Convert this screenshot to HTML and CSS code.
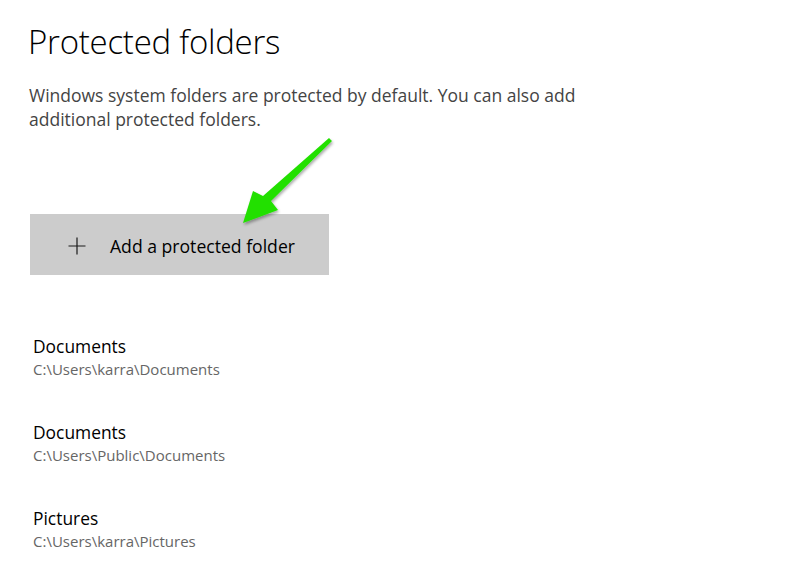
FILE: index.html
```html
<!DOCTYPE html>
<html>
<head>
<meta charset="utf-8">
<link rel="stylesheet" href="styles.css">
</head>
<body>
<main class="page">
  <h1 class="title">Protected folders</h1>
  <p class="desc">Windows system folders are protected by default. You can also add additional protected folders.</p>
  <div class="btn-wrap">
    <button class="add-btn">
      <svg class="plus" width="18" height="18" viewBox="0 0 18 18"><path d="M9 0.5V17.5M0.5 9H17.5" stroke="#1a1a1a" stroke-width="1.2" fill="none"/></svg>
      <span>Add a protected folder</span>
    </button>
    <svg class="arrow" width="120" height="110" viewBox="0 0 120 110">
      <defs>
        <filter id="sh" x="-20%" y="-20%" width="140%" height="140%">
          <feGaussianBlur in="SourceAlpha" stdDeviation="1.5"/>
          <feOffset dx="1" dy="1.5"/>
          <feComponentTransfer><feFuncA type="linear" slope="0.35"/></feComponentTransfer>
          <feMerge><feMergeNode/><feMergeNode in="SourceGraphic"/></feMerge>
        </filter>
      </defs>
      <polygon filter="url(#sh)" fill="#22e000" points="98,6 101,9 40,69 47,78 12,91 22,59 32,64"/>
    </svg>
  </div>
  <ul class="list">
    <li class="item"><div class="name">Documents</div><div class="path">C:\Users\karra\Documents</div></li>
    <li class="item"><div class="name">Documents</div><div class="path">C:\Users\Public\Documents</div></li>
    <li class="item"><div class="name">Pictures</div><div class="path">C:\Users\karra\Pictures</div></li>
  </ul>
</main>
</body>
</html>
```
FILE: styles.css
```css
html, body {
  margin: 0;
  padding: 0;
  background: #fff;
}
body {
  font-family: "Open Sans", "Noto Sans", sans-serif;
  color: #000;
}
.page {
  padding: 20px 0 0 28px;
}
.title {
  margin: 0;
  font-weight: 300;
  font-size: 33px;
  line-height: 44px;
  color: #000;
  letter-spacing: -0.25px;
}
.desc {
  margin: 19px 0 0 1px;
  width: 600px;
  font-size: 17.5px;
  line-height: 24px;
  color: #444;
}
.btn-wrap {
  position: relative;
  margin-top: 83px;
  margin-left: 2px;
  width: 300px;
}
.add-btn {
  display: flex;
  align-items: center;
  width: 299px;
  height: 61px;
  border: 0;
  padding: 2px 0 0 38px;
  background: #cccccc;
  font-family: inherit;
  font-size: 17.6px;
  color: #000;
}
.plus {
  flex: none;
  margin-right: 24px;
}
.arrow {
  position: absolute;
  left: 201px;
  top: -82px;
}
.list {
  list-style: none;
  margin: 59px 0 0 5px;
  padding: 0;
}
.item {
  height: 86px;
}
.name {
  font-size: 17.4px;
  line-height: 24px;
  color: #000;
}
.path {
  font-size: 15px;
  line-height: 22px;
  color: #666;
}
```
